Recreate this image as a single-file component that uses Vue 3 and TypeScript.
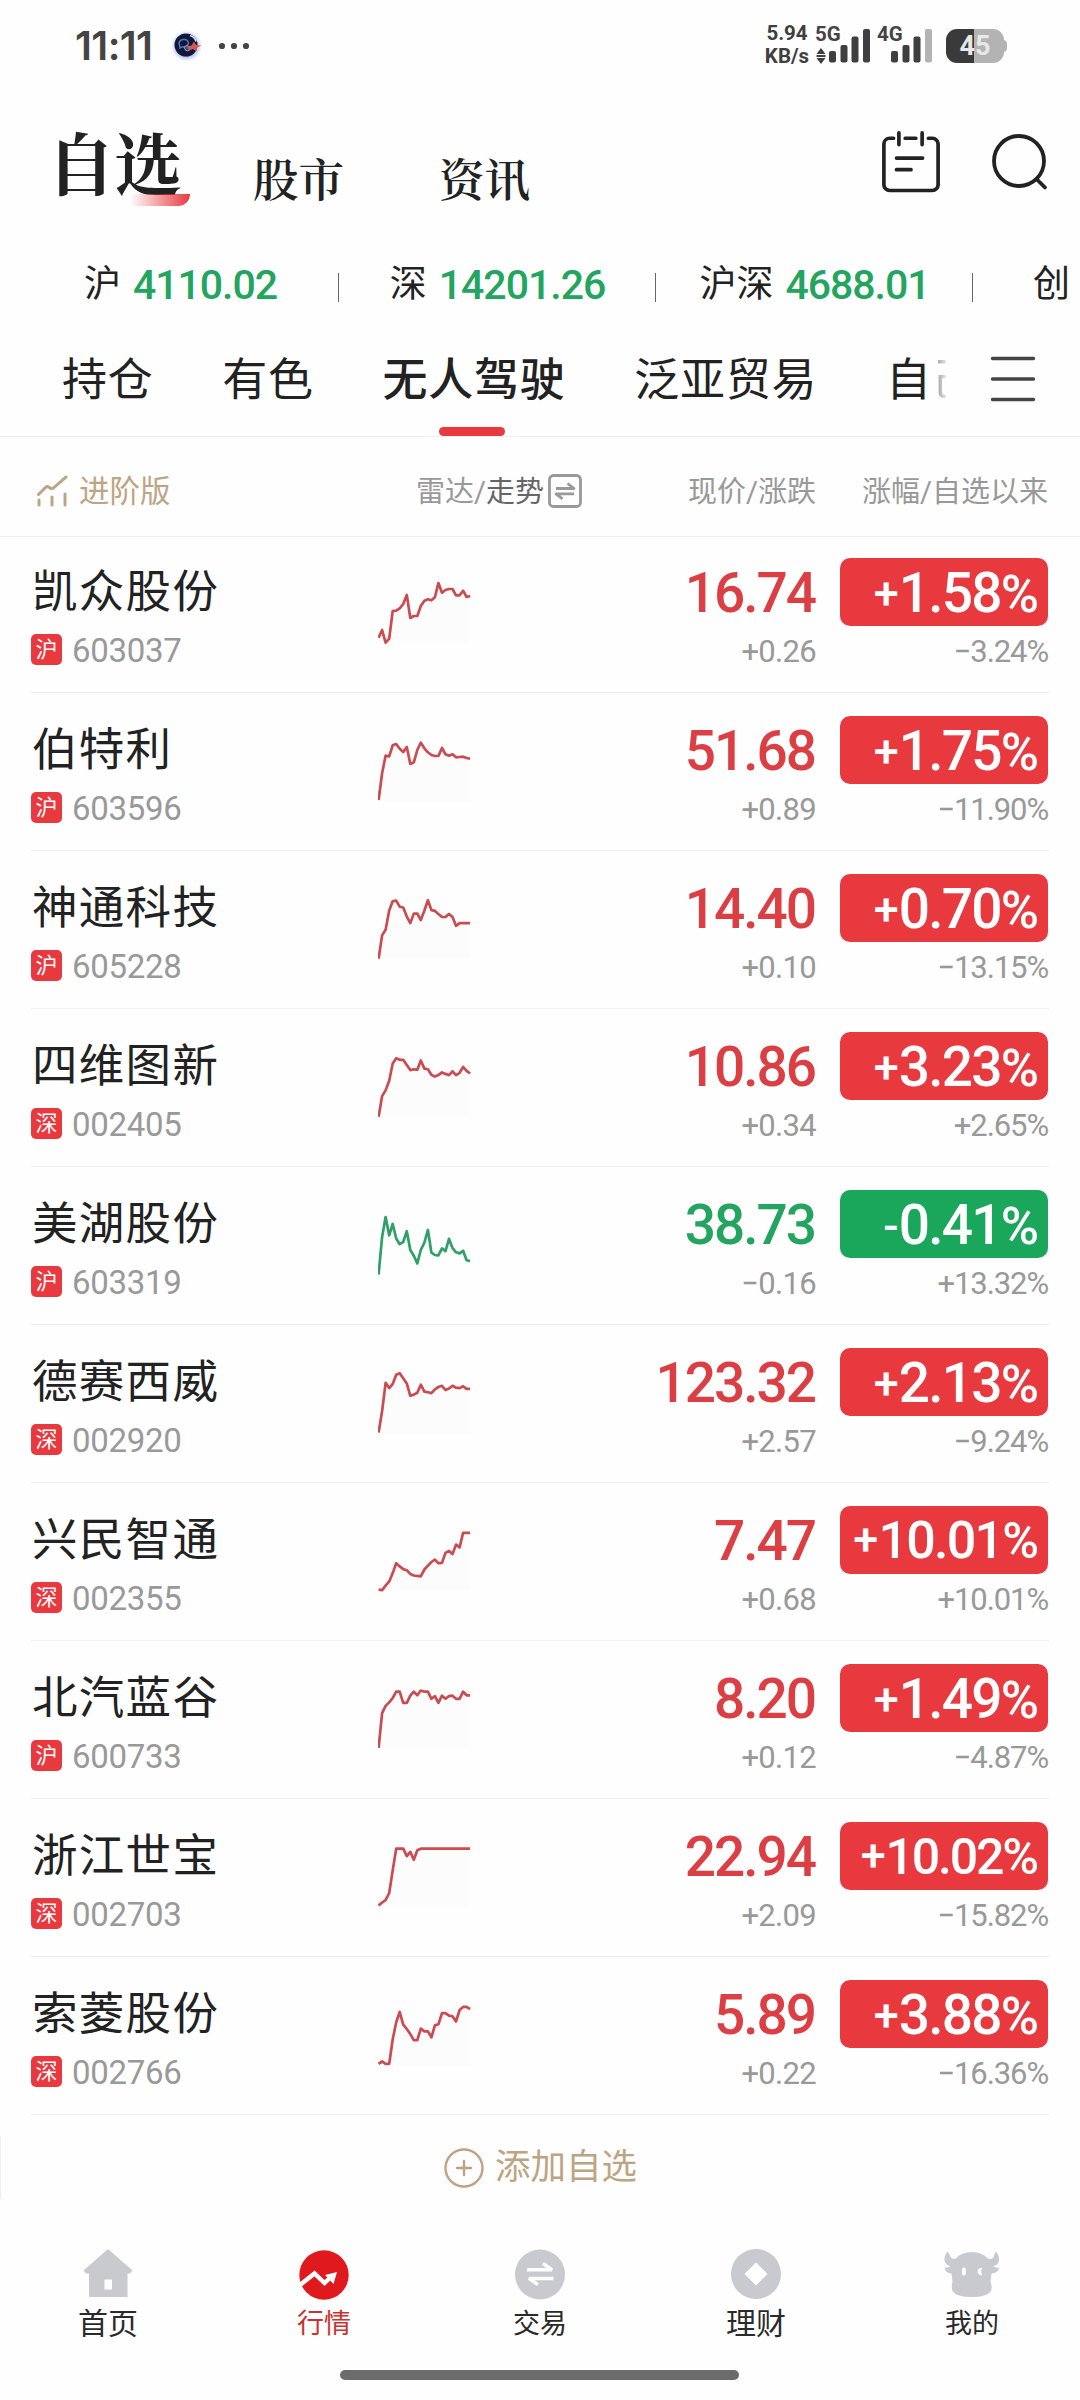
<script setup lang="ts">
type Market = '沪' | '深'

interface Stock {
  name: string
  market: Market
  code: string
  price: string
  change: string
  percent: string
  since: string
  trend: number[]
}

const indices = [
  { name: '沪', value: '4110.02' },
  { name: '深', value: '14201.26' },
  { name: '沪深', value: '4688.01' },
]

const groups = ['持仓', '有色', '无人驾驶', '泛亚贸易', '自']
const activeGroup = '无人驾驶'

const stocks: Stock[] = [
  { name: '凯众股份', market: '沪', code: '603037', price: '16.74', change: '+0.26', percent: '+1.58', since: '−3.24%',
    trend: [102.7, 95, 107.7, 103.7, 76, 75.7, 73.3, 69, 60, 83, 81, 81, 71, 65.7, 64.3, 65.3, 62.3, 48, 57.7, 55, 54, 54, 60.3, 60.3, 55.7, 62, 61] },
  { name: '伯特利', market: '沪', code: '603596', price: '51.68', change: '+0.89', percent: '+1.75', since: '−11.90%',
    trend: [107, 80.3, 62.7, 63.3, 52.3, 51, 55.7, 59, 54, 71, 69.3, 57, 49.7, 55.3, 59.3, 62, 63, 63, 55, 61.3, 62.7, 61.3, 64.3, 64, 63.7, 65, 65.7] },
  { name: '神通科技', market: '沪', code: '605228', price: '14.40', change: '+0.10', percent: '+0.70', since: '−13.15%',
    trend: [107.7, 84.4, 78.7, 59.5, 50.3, 49.6, 55.7, 56.5, 65.6, 72.1, 62.6, 62.6, 69.1, 59.5, 49.2, 59.1, 59.9, 63, 66, 66, 63, 66, 74.8, 72.1, 72.1, 72.1, 72.1] },
  { name: '四维图新', market: '深', code: '002405', price: '10.86', change: '+0.34', percent: '+3.23', since: '+2.65%',
    trend: [107.8, 87.1, 81.4, 71.8, 54.6, 49.2, 50.8, 50.8, 56.1, 61.1, 60.3, 60.7, 51.5, 59.6, 60.3, 65.7, 67.6, 66.1, 63.4, 64.9, 66.1, 62.3, 66.1, 63.8, 58, 61.9, 64.5] },
  { name: '美湖股份', market: '沪', code: '603319', price: '38.73', change: '−0.16', percent: '-0.41', since: '+13.32%',
    trend: [107.5, 70, 50, 68.4, 57, 71.5, 77.2, 75, 64.2, 83, 88.7, 96.4, 83, 75.7, 63, 85.6, 88, 88.3, 81.4, 84.1, 71.9, 81, 85.3, 86.4, 83.7, 93.3, 94] },
  { name: '德赛西威', market: '深', code: '002920', price: '123.32', change: '+2.57', percent: '+2.13', since: '−9.24%',
    trend: [107.5, 86.1, 57.8, 63.1, 58.9, 49.7, 48.2, 53.2, 58.5, 70.8, 69.6, 67.7, 59.7, 66.6, 67.3, 68.1, 64.3, 62, 60.8, 65, 63.5, 60.8, 62.7, 63.1, 61.2, 63.9, 63.9] },
  { name: '兴民智通', market: '深', code: '002355', price: '7.47', change: '+0.68', percent: '+10.01', since: '+10.01%',
    trend: [106.7, 107.1, 102.7, 98.4, 90.1, 80.2, 83.4, 86.1, 87.3, 90.9, 92.5, 92.9, 93.3, 86.5, 82.6, 79, 76.6, 80.2, 79.8, 69.9, 67.9, 71.1, 61.6, 64.4, 49.8, 49.8, 49.8] },
  { name: '北汽蓝谷', market: '沪', code: '600733', price: '8.20', change: '+0.12', percent: '+1.49', since: '−4.87%',
    trend: [106.9, 72.1, 64.9, 61.4, 57, 50.7, 50.7, 61.8, 61.8, 54.7, 50.7, 54.3, 49.5, 50.7, 50.7, 57.8, 55.1, 61.8, 54.7, 57.8, 55.1, 54.7, 57.8, 57.8, 50.7, 54.3, 54.3] },
  { name: '浙江世宝', market: '深', code: '002703', price: '22.94', change: '+2.09', percent: '+10.02', since: '−15.82%',
    trend: [106.6, 103.5, 101.1, 94, 71.4, 49.7, 49.7, 49.7, 57.2, 52.9, 60.8, 51.3, 49.7, 49.7, 49.7, 49.7, 49.7, 49.7, 49.7, 49.7, 49.7, 49.7, 49.7, 49.7, 49.7, 49.7, 49.7] },
  { name: '索菱股份', market: '深', code: '002766', price: '5.89', change: '+0.22', percent: '+3.88', since: '−16.36%',
    trend: [106.8, 104.4, 106.8, 106.8, 82.3, 65.3, 55, 67.7, 72, 77.1, 83.1, 83.1, 71.6, 74.4, 74.4, 80.3, 68.4, 67.3, 56.2, 56.2, 58.6, 59.3, 64.5, 53, 49.9, 49.9, 52.2] },
]

const isDown = (s: Stock) => s.percent.startsWith('-')

const line = (t: number[]) => t.map((y, i) => `${(i * 3.52 + 0.6).toFixed(1)},${y}`).join(' ')
const area = (t: number[]) => `0.6,108 ${line(t)} 92.1,108`
</script>

<template>
  <div class="app">
    <header class="status">
      <span class="time">11:11</span>
      <svg class="orb" width="34" height="34" viewBox="0 0 34 34">
        <defs>
          <radialGradient id="halo">
            <stop offset="0.6" stop-color="#8fa2ee" stop-opacity="0.9" />
            <stop offset="1" stop-color="#c8d2ff" stop-opacity="0" />
          </radialGradient>
        </defs>
        <circle cx="16.500" cy="17" r="16" fill="url(#halo)" />
        <circle cx="16" cy="16" r="11.500" fill="#101737" />
        <path d="M20 6.500q5 1.500 6 6" fill="none" stroke="#dfe6ff" stroke-width="1.600" />
        <path d="M9 14q1-4 5.500-3.500 4 .500 4 4-2 4-6.500 3.500l-2 1z" fill="none" stroke="#4d78b8" stroke-width="1.500" />
        <path d="M14 18q3-3 6 0 1 3-2 4-3 .500-4-4z" fill="#2e4f8a" stroke="#7ba0d8" stroke-width="1" />
        <path d="M17 17.500l4.500-1 2.500-4 2 3.500 5.500.500-4.500 2-.500 4-3.500-2.500-4 1.500z" fill="#d6574c" />
      </svg>
      <svg class="dots" width="32" height="8" viewBox="0 0 32 8" fill="#444">
        <circle cx="4" cy="4" r="3.100" /><circle cx="16" cy="4" r="3.100" /><circle cx="28" cy="4" r="3.100" />
      </svg>
      <div class="net"><span>5.94</span><span>KB/s</span></div>
      <div class="signal s5">
        <span class="gen">5G</span>
        <svg width="56" height="36" viewBox="0 0 56 36" fill="#3f3f3f">
          <path d="M6 20l4.500 6h-9zM6 36l-4.500-6h9zM1.500 27h9v2h-9z" />
          <rect x="14" y="23" width="7" height="11.500" rx="2" /><rect x="25.500" y="17" width="7" height="17.500" rx="2" />
          <rect x="36.500" y="8.500" width="7" height="26" rx="2" /><rect x="48" y="1" width="7" height="33.500" rx="2" />
        </svg>
      </div>
      <div class="signal s4">
        <span class="gen">4G</span>
        <svg width="56" height="36" viewBox="0 0 56 36" fill="#3f3f3f">
          <rect x="14" y="23" width="7" height="11.500" rx="2" /><rect x="25.500" y="17" width="7" height="17.500" rx="2" />
          <rect x="36.500" y="8.500" width="7" height="26" rx="2" /><rect x="48" y="1" width="7" height="33.500" rx="2" fill="#b3b3b3" />
        </svg>
      </div>
      <div class="battery"><span>45</span></div>
    </header>

    <nav class="sections">
      <span class="section main">自选<i></i></span>
      <span class="section">股市</span>
      <span class="section last">资讯</span>
      <svg class="calendar" width="60" height="64" viewBox="0 0 62 66" fill="none" stroke="#222" stroke-width="3.800" stroke-linecap="round">
        <path d="M13 9.500H9a6 6 0 0 0-6 6v42a6 6 0 0 0 6 6h44a6 6 0 0 0 6-6v-42a6 6 0 0 0-6-6h-4M25 9.500h11M18.500 4v12M42.500 4v12M16 30h27M16 42h15" />
      </svg>
      <svg class="search" width="60" height="62" viewBox="0 0 60 62" fill="none" stroke="#222" stroke-width="3.800" stroke-linecap="round">
        <circle cx="29" cy="29" r="25" /><path d="M47 47.500l8 8" />
      </svg>
    </nav>

    <div class="indices">
      <div v-for="x in indices" :key="x.name" class="index"><span>{{ x.name }}</span><b>{{ x.value }}</b></div>
      <div class="index cut"><span>创</span></div>
    </div>

    <div class="groups">
      <span v-for="g in groups" :key="g" class="group" :class="{ active: g === activeGroup }">{{ g }}</span>
      <span class="peek">己</span>
      <svg class="menu" width="46" height="46" viewBox="0 0 46 46" stroke="#444" stroke-width="3.400" stroke-linecap="round">
        <path d="M2.500 2.500h41M2.500 23h41M2.500 43.500h41" />
      </svg>
    </div>

    <div class="columns">
      <div class="pro">
        <svg width="32" height="32" viewBox="0 0 32 32" fill="none" stroke="#bda584" stroke-width="3" stroke-linecap="round" stroke-linejoin="round">
          <path d="M2.500 19.500l7-7q2-2 4.500.500 1.800 1.500 4-.500L30 2M3 25v5M16 22v8M29 19v11" />
        </svg>
        <span>进阶版</span>
      </div>
      <div class="radar">
        <span>雷达/</span><span class="on">走势</span>
        <svg width="34" height="34" viewBox="0 0 34 34" fill="none" stroke="#999" stroke-width="2.800">
          <rect x="1.500" y="1.500" width="31" height="31" rx="4" />
          <path d="M8 14.500h18l-6.500-5M26 19.800H8l6.500 5" stroke-linejoin="round" />
        </svg>
      </div>
      <span class="c-price">现价/涨跌</span>
      <span class="c-percent">涨幅/自选以来</span>
    </div>

    <main class="list">
      <article v-for="s in stocks" :key="s.code" class="row" :class="{ down: isDown(s) }">
        <div class="id">
          <span class="name">{{ s.name }}</span>
          <span class="sub"><em>{{ s.market }}</em><span class="code">{{ s.code }}</span></span>
        </div>
        <svg class="spark" width="94" height="157" viewBox="0 0 94 157">
          <polygon v-if="!isDown(s)" :points="area(s.trend)" fill="#fcfcfc" />
          <polyline :points="line(s.trend)" fill="none" stroke-width="2.700" stroke-linejoin="round" />
        </svg>
        <div class="num">
          <span class="price">{{ s.price }}</span>
          <span class="minor">{{ s.change }}</span>
        </div>
        <div class="pct">
          <span class="badge" :class="{ long: s.percent.length > 5, tight: s.percent === '+10.02' }"><span class="lead">{{ s.percent[0] }}</span><span>{{ s.percent.slice(1) }}</span><span class="sign">%</span></span>
          <span class="minor">{{ s.since }}</span>
        </div>
      </article>
    </main>

    <div class="add">
      <svg width="40" height="40" viewBox="0 0 40 40" fill="none" stroke="#bda584" stroke-width="2.400" stroke-linecap="round">
        <circle cx="20" cy="20" r="18.500" /><path d="M13 20h14M20 13v14" />
      </svg>
      <span>添加自选</span>
    </div>

    <footer class="tabbar">
      <div class="tab wide">
        <svg width="56" height="52" viewBox="0 0 56 52" fill="#c9cacf">
          <path fill-rule="evenodd" d="M28 1L52.500 22.500 50 25.500H47.500V49H9V25.500H6L3.500 22.500ZM24.500 31.500v10h7.500v-10z" />
        </svg>
        <span>首页</span>
      </div>
      <div class="tab on">
        <svg width="56" height="52" viewBox="0 0 56 52">
          <circle cx="28" cy="27" r="24.700" fill="#e0191e" />
          <path d="M4 37l14.500-11.500 10 9.500 7.500-7" fill="none" stroke="#fff" stroke-width="4.400" />
          <path d="M29 27l12-3-3.500 12z" fill="#fff" />
        </svg>
        <span>行情</span>
      </div>
      <div class="tab">
        <svg width="56" height="52" viewBox="0 0 56 52">
          <circle cx="28" cy="26.500" r="25" fill="#c9cacf" />
          <path d="M15 21.700h25l-9-6.200M41.500 30.500H17l9 6.200" fill="none" stroke="#fff" stroke-width="3.400" stroke-linejoin="bevel" />
        </svg>
        <span>交易</span>
      </div>
      <div class="tab wide">
        <svg width="56" height="52" viewBox="0 0 56 52">
          <circle cx="28" cy="26" r="25" fill="#c9cacf" /><path d="M28 14.500l11.500 11.500L28 37.500 16.500 26z" fill="#fff" />
        </svg>
        <span>理财</span>
      </div>
      <div class="tab">
        <svg width="56" height="52" viewBox="0 0 56 52">
          <path d="M3 4Q0 8 .5 13 2 17 6.500 18.500 3 20 .5 19.500 1 25 7.500 25.500L8.500 34Q7 38 8.500 43 12 49 28 49 43 49 47 43 48.500 38 46.500 34L47.500 25.500Q54 25 55.500 19.500 52 20 49 18.500 54 17 55 13 55.500 8 52.500 4 50.500 4 50 8 48.500 12 43.500 10.500 38 4 28 4 17 4 12 10.500 7.500 12 6 8 5 4 3 4Z" fill="#c9cacf" />
          <rect x="18" y="19.500" width="3.800" height="8" rx="1.800" fill="#fff" />
          <path d="M38 19.500q-4.500 1-4.500 4t4.500 4q-1.500-4 0-8z" fill="#fff" />
        </svg>
        <span>我的</span>
      </div>
    </footer>
    <div class="home-bar"></div>
  </div>
</template>

<style>
body {
  background: #fdfdfd;
}
</style>

<style scoped>
.app {
  box-sizing: border-box;
  width: 1080px;
  height: 2400px;
  overflow: hidden;
  background: #fefefe;
  color: #222;
  font-family: Roboto, "Noto Sans CJK SC", sans-serif;
  display: flex;
  flex-direction: column;
}
.app > * {
  flex: none;
  box-sizing: border-box;
}
.status {
  height: 92px;
  display: flex;
  align-items: center;
  padding-left: 75px;
  color: #444;
}
.time {
  font: 600 40px/40px Inter, sans-serif;
  letter-spacing: -0.6px;
  width: 94px;
}
.orb {
  margin-left: 1px;
}
.dots {
  margin-left: 14px;
}
.net {
  margin-left: 514px;
  width: 46px;
  display: flex;
  flex-direction: column;
  align-items: center;
  font: 700 20.500px/22.500px Roboto, sans-serif;
  color: #3f3f3f;
  margin-top: -3px;
}
.signal {
  position: relative;
  height: 36px;
}
.s5 {
  margin-left: 5px;
}
.s4 {
  margin-left: 6px;
}
.gen {
  position: absolute;
  left: 0;
  top: -4px;
  font: 700 20.500px/20px Roboto, sans-serif;
}
.battery {
  position: relative;
  margin-left: 13px;
  width: 58px;
  height: 34px;
  border-radius: 11px;
  background: linear-gradient(90deg, #3a3a3a 28px, #b3b3b3 28px);
  display: flex;
  align-items: center;
  justify-content: center;
  color: #e8e8e8;
  font: 700 27px/34px Roboto, sans-serif;
}
.battery::after {
  content: "";
  position: absolute;
  left: 57px;
  top: 11px;
  width: 4px;
  height: 12px;
  border-radius: 0 4px 4px 0;
  background: #b3b3b3;
}
.sections {
  height: 158px;
  display: flex;
  align-items: flex-start;
  padding-left: 47px;
  font-family: "Noto Serif CJK SC", "Noto Serif SC", serif;
  font-weight: 700;
}
.section {
  font-size: 45.500px;
  line-height: 60px;
  margin-top: 56px;
  width: 186px;
  font-weight: 600;
}
.section.main {
  position: relative;
  font-size: 68px;
  line-height: 80px;
  letter-spacing: -1px;
  margin-top: 29px;
  width: 206px;
  font-weight: 700;
}
.section.last {
  width: 442px;
}
.main i {
  position: absolute;
  left: 83px;
  top: 73px;
  width: 60px;
  height: 12px;
  border-radius: 0 0 16px 0;
  background: linear-gradient(90deg, rgba(232, 57, 63, 0), #e8393f);
}
.calendar {
  margin-top: 37px;
}
.search {
  margin: 40px 0 0 49px;
}
.indices {
  height: 70px;
  display: flex;
  align-items: center;
  padding-left: 22px;
  overflow: hidden;
}
.index {
  position: relative;
  flex: none;
  width: 317px;
  display: flex;
  align-items: center;
  justify-content: center;
  gap: 12px;
  font-size: 37px;
  line-height: 72px;
}
.index b {
  font-weight: 500;
  font-size: 41px;
  letter-spacing: -1px;
  color: #23a45f;
}
.index::after {
  content: "";
  position: absolute;
  right: 0;
  top: 24px;
  width: 1px;
  height: 29px;
  background: #666;
}
.index.cut {
  justify-content: flex-start;
  padding-left: 60px;
}
.groups {
  height: 117px;
  display: flex;
  align-items: flex-start;
  padding-left: 62px;
  border-bottom: 1px solid #f1f1f1;
}
.group {
  position: relative;
  flex: none;
  font-size: 45px;
  letter-spacing: 0.8px;
  line-height: 122px;
  height: 116px;
  margin-right: 68.600px;
}
.group.active {
  font-weight: 500;
}
.group.active::after {
  content: "";
  position: absolute;
  left: 57px;
  bottom: 0;
  width: 66px;
  height: 9px;
  border-radius: 5px;
  background: #e8393f;
}
.group:nth-child(5) {
  margin-right: 0;
}
.peek {
  width: 14px;
  height: 116px;
  overflow: hidden;
  font-size: 45px;
  line-height: 122px;
  color: transparent;
  background: linear-gradient(90deg, #777, #e8e8e8);
  background-clip: text;
  -webkit-background-clip: text;
}
.menu {
  margin: 36px 44px 0 auto;
}
.columns {
  height: 100px;
  display: flex;
  align-items: center;
  border-bottom: 1px solid #efefef;
  padding: 8px 32px 0 36px;
  font-size: 29px;
  color: #999;
}
.columns span {
  margin-top: -3px;
}
.pro {
  display: flex;
  align-items: center;
  gap: 11px;
  width: 380px;
  font-size: 30.500px;
  color: #bda584;
}
.radar {
  display: flex;
  align-items: center;
}
.radar .on {
  color: #666;
}
.radar svg {
  margin-left: 4px;
}
.c-price {
  margin-left: auto;
}
.c-percent {
  width: 232px;
  text-align: right;
}
.list {
  margin: -2px 31px 0;
}
.row {
  height: 158px;
  box-sizing: border-box;
  border-bottom: 1px solid #f1f1f1;
  display: flex;
  align-items: flex-start;
  --tone: #dc3f43;
  --fill: #e8393f;
  --stroke: #cb4b50;
}
.row.down {
  --tone: #23a45f;
  --fill: #1ba75b;
  --stroke: #2fa068;
}
.id {
  width: 347px;
  display: flex;
  flex-direction: column;
}
.name {
  margin: 28px 0 0 1px;
  font-size: 45.500px;
  letter-spacing: 1.3px;
  line-height: 60px;
}
.sub {
  display: flex;
  align-items: center;
  margin-top: 11px;
  height: 31px;
}
.sub em {
  width: 31px;
  height: 31px;
  border-radius: 5px;
  background: #e8393f;
  color: #fff;
  font-style: normal;
  font-size: 22px;
  line-height: 31px;
  text-align: center;
}
.code {
  margin: 2px 0 0 10px;
  font-size: 33px;
  letter-spacing: -0.3px;
  color: #999;
}
.spark {
  display: block;
  stroke: var(--stroke);
}
.spark polygon {
  stroke: none;
}
.num {
  width: 344px;
  display: flex;
  flex-direction: column;
  align-items: flex-end;
}
.price {
  margin: 25px 1px 0 0;
  height: 66px;
  line-height: 67px;
  font-weight: 500;
  font-size: 55px;
  letter-spacing: -2px;
  color: var(--tone);
}
.minor {
  margin-top: 8px;
  font-size: 31px;
  line-height: 36px;
  letter-spacing: -0.7px;
  color: #999;
}
.pct {
  margin: 0 1px 0 auto;
  display: flex;
  flex-direction: column;
  align-items: flex-end;
}
.badge {
  box-sizing: border-box;
  margin-top: 23px;
  width: 208px;
  height: 68px;
  border-radius: 10px;
  background: var(--fill);
  color: #fff;
  display: flex;
  justify-content: flex-end;
  align-items: baseline;
  padding-right: 10px;
  font-weight: 500;
  font-size: 55px;
  line-height: 70px;
  letter-spacing: -1.8px;
}
.lead {
  position: relative;
  top: -3px;
  margin-right: 2px;
  font-size: 45px;
}
.badge.long {
  font-size: 52px;
}
.badge.tight {
  font-size: 50px;
  letter-spacing: -2.2px;
}
.sign {
  font-size: 52px;
  letter-spacing: -1px;
}
.long .sign {
  font-size: 50px;
}
.pct .minor {
  margin-top: 8px;
  letter-spacing: -1.1px;
}
.add {
  height: 63px;
  margin-top: 21px;
  display: flex;
  align-items: center;
  justify-content: center;
  gap: 11px;
  border-left: 1px solid #ededed;
  font-size: 35.500px;
  color: #bda584;
}
.add span {
  margin-top: -9px;
}
.tabbar {
  margin-top: 46px;
  height: 115px;
  display: flex;
}
.tab {
  flex: 1;
  display: flex;
  flex-direction: column;
  align-items: center;
  font-size: 27px;
  line-height: 36px;
  color: #2a2a2a;
}
.tab svg {
  margin-top: 3px;
}
.tab span {
  margin-top: 6px;
}
.tab.wide {
  font-size: 30px;
}
.tab.on {
  color: #c8322f;
}
.home-bar {
  margin: 10px 0 0 340px;
  width: 399px;
  height: 10px;
  border-radius: 5px;
  background: #6b6b6b;
}
</style>
